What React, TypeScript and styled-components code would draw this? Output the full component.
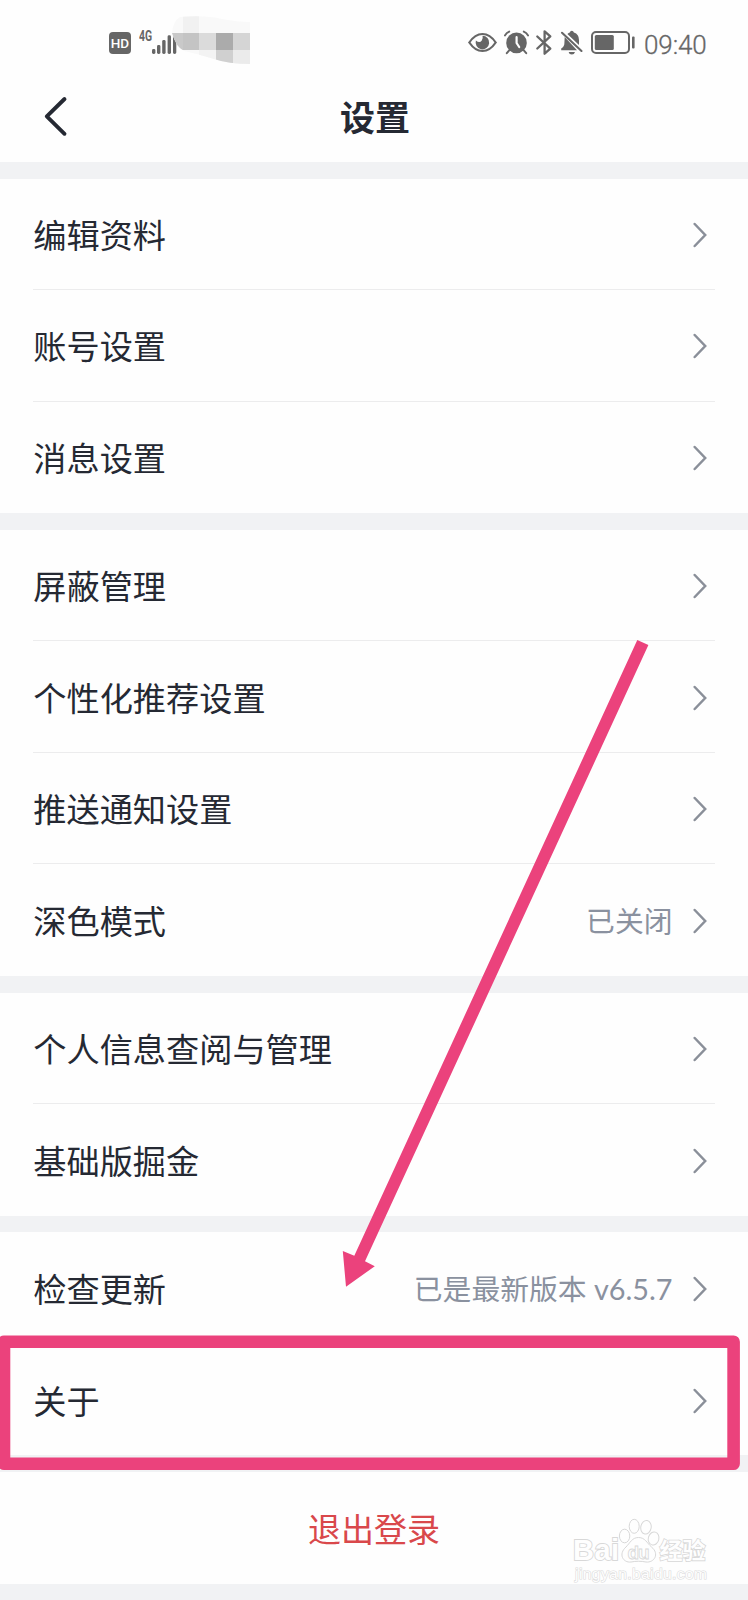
import React from "react";
import styled, { createGlobalStyle } from "styled-components";

const GlobalStyle = createGlobalStyle`
  html, body { margin: 0; padding: 0; background: #fefefe; }
  body { font-family: "Noto Sans CJK SC", sans-serif; color: #252933; }
  * { box-sizing: border-box; }
`;

const Screen = styled.main`
  position: relative;
  width: 748px;
  height: 1600px;
  overflow: hidden;
  display: flex;
  flex-direction: column;
  background: #f1f2f4;
`;

const StatusBar = styled.div`
  display: flex;
  align-items: flex-start;
  height: 74px;
  padding: 0 41px 0 109px;
  background: #fefefe;
  color: #666;
`;

const StatusIcon = styled.svg<{ $top: number; $left?: number }>`
  display: block;
  flex: none;
  overflow: visible;
  margin-top: ${(p) => p.$top}px;
  margin-left: ${(p) => p.$left ?? 0}px;
`;

const Spacer = styled.div`
  flex: 1;
`;

const HdBadge = styled.span`
  width: 22px;
  height: 22px;
  margin-top: 32px;
  border-radius: 4px;
  background: #666;
  color: #fff;
  font: 500 13.5px/23px Roboto, sans-serif;
  text-align: center;
`;

const Network = styled.span`
  width: 13px;
  margin: 30px 0 0 7.5px;
  font: 700 14.5px/14px Roboto, sans-serif;
  white-space: nowrap;
  transform: scaleX(0.72);
  transform-origin: left;
`;

const Clock = styled.span`
  width: 63px;
  margin: 30px 0 0 9px;
  font: 300 26px/31px Roboto, sans-serif;
  letter-spacing: -0.1px;
  white-space: nowrap;
  -webkit-text-stroke: 0.3px #666;
`;

const Header = styled.header`
  display: grid;
  grid-template-columns: 100px 1fr 100px;
  align-items: center;
  height: 88px;
  background: #fefefe;
`;

const BackIcon = styled.svg`
  display: block;
  margin: 0 0 2px 44px;
`;

const Title = styled.h1`
  margin: 0;
  padding: 0 0 4px 2px;
  font-size: 35px;
  line-height: 50px;
  font-weight: 700;
  text-align: center;
`;

const Section = styled.section`
  flex: none;
  margin-top: 16.7px;
  background: #fefefe;
`;

const Row = styled.div`
  display: flex;
  align-items: center;
  height: 111.5px;
  margin: 0 33px;
  padding: 2px 8px 0 0;
  font-size: 33.2px;
  &:not(:last-child) {
    border-bottom: 1px solid #ececed;
  }
`;

const Label = styled.span`
  flex: 1;
  padding: 0 0 2px 0.3px;
  line-height: 48px;
`;

const Value = styled.span`
  margin-right: 20.5px;
  color: #8a919f;
  font-family: Lato, "Noto Sans CJK SC", sans-serif;
  font-size: 28.8px;
  line-height: 42px;
  white-space: nowrap;
`;

const Logout = styled.div`
  display: flex;
  flex: none;
  align-items: center;
  justify-content: center;
  height: 111.6px;
  margin-top: 16.7px;
  background: #fefefe;
  color: #d9484b;
  font-size: 33px;
`;

const Annotation = styled.svg`
  position: absolute;
  inset: 0;
  pointer-events: none;
`;

const Watermark = styled.svg`
  position: absolute;
  left: 570px;
  top: 1515px;
  overflow: visible;
`;

const Chevron = () => (
  <svg width="14" height="26" viewBox="0 0 14 26" fill="none" stroke="#8a8f99" strokeWidth="2.5" strokeLinecap="round">
    <path d="M1.7 2 12.2 13 1.7 24" />
  </svg>
);

type Item = { label: string; value?: string };

const groups: Item[][] = [
  [{ label: "编辑资料" }, { label: "账号设置" }, { label: "消息设置" }],
  [
    { label: "屏蔽管理" },
    { label: "个性化推荐设置" },
    { label: "推送通知设置" },
    { label: "深色模式", value: "已关闭" },
  ],
  [{ label: "个人信息查阅与管理" }, { label: "基础版掘金" }],
  [{ label: "检查更新", value: "已是最新版本 v6.5.7" }, { label: "关于" }],
];

const Signal = () => (
  <StatusIcon $top={32} width="24" height="22" viewBox="0 0 24 22" fill="#666">
    <rect x="0" y="17" width="3.4" height="5" rx="1.4" />
    <rect x="5" y="13" width="3.4" height="9" rx="1.4" />
    <rect x="10.2" y="8" width="3.4" height="14" rx="1.4" />
    <rect x="15.6" y="3.3" width="3.4" height="18.7" rx="1.4" />
    <path d="M21 1Q22 6 24.3 9V20.6Q24.3 22 22.6 22T21 20.6Z" />
  </StatusIcon>
);

const Mosaic = () => (
  <StatusIcon $top={16} $left={-4} width="78" height="48" viewBox="0 0 78 48">
    <clipPath id="smudge">
      <path d="M0 17Q1 5 8 1Q34-1 50 3Q65 6 78 6V48Q56 48 42 43Q22 37 12 35Q4 31 0 17Z" />
    </clipPath>
    <g clipPath="url(#smudge)" shapeRendering="crispEdges">
      <rect width="78" height="48" fill="#f9f9f9" />
      <rect x="11" width="16" height="17" fill="#f1f1f1" />
      <rect y="17" width="11" height="17" fill="#c9c9c9" />
      <rect x="11" y="17" width="16" height="17" fill="#c4c4c4" />
      <rect x="27" y="17" width="17" height="17" fill="#dbdbdb" />
      <rect x="44" y="17" width="17" height="17" fill="#ababab" />
      <rect x="61" y="17" width="17" height="17" fill="#d5d5d5" />
      <rect x="27" y="34" width="17" height="14" fill="#f3f3f3" />
      <rect x="44" y="34" width="17" height="14" fill="#d0d0d0" />
      <rect x="61" y="34" width="17" height="14" fill="#ebebeb" />
    </g>
  </StatusIcon>
);

const EyeIcon = () => (
  <StatusIcon $top={33} width="29" height="19" viewBox="0 0 29 19" fill="none" stroke="#666" strokeWidth="2.2">
    <path d="M1.3 9.5Q7 1 14.5 1T27.7 9.5Q22 18 14.5 18T1.3 9.5Z" />
    <path d="M14.5 2.8A6.8 6.8 0 1 1 7.9 7.6Q11.6 10.6 13.8 7.6Q15.3 5.4 14.5 2.8Z" fill="#666" stroke="none" />
  </StatusIcon>
);

const AlarmIcon = () => (
  <StatusIcon $top={30} $left={7} width="25" height="25" viewBox="0 0 25 25" fill="none" stroke="#666" strokeWidth="2" strokeLinecap="round">
    <circle cx="12.5" cy="12.9" r="10.3" fill="#666" stroke="none" />
    <path d="M1 5.4Q2.4 2.8 5.2 1.6M24 5.4Q22.6 2.8 19.8 1.6M5.4 20.2 2.8 23.2M19.6 20.2 22.2 23.2" />
    <path d="M12.6 7.2V13L15.2 17" stroke="#fff" strokeWidth="2.2" />
  </StatusIcon>
);

const BluetoothIcon = () => (
  <StatusIcon $top={30} $left={7.5} width="16" height="25" viewBox="0 0 16 25" fill="none" stroke="#666" strokeWidth="2.3" strokeLinecap="round" strokeLinejoin="round">
    <path d="M1.3 6.5 14.3 18.6 8.6 23.7V1.3L14.3 6.4 1.3 18.5" />
  </StatusIcon>
);

const MutedBellIcon = () => (
  <StatusIcon $top={30} $left={8} width="23" height="25" viewBox="0 0 23 25" fill="#666">
    <path d="M7.4 4Q8.7 2.6 9.8 2.5Q10.2.8 11.8.8T13.9 2.5Q19 4.2 19 10V15L7.4 4ZM4.7 7 17 20.2H1.2V18.6Q4.4 16.6 4.4 13Z" />
    <path d="M8.6 22H15Q14.4 24.6 11.8 24.6T8.6 22Z" />
    <path d="M2 2.8 21.5 21" fill="none" stroke="#666" strokeWidth="2.1" strokeLinecap="round" />
  </StatusIcon>
);

const BatteryIcon = () => (
  <StatusIcon $top={31} $left={8} width="44" height="23" viewBox="0 0 44 23" fill="#666">
    <rect x="1" y="1" width="37" height="21" rx="4" fill="none" stroke="#666" strokeWidth="2" />
    <rect x="3.8" y="4" width="19" height="15" rx="1.5" />
    <rect x="41" y="5.5" width="2.6" height="12" rx="1" />
  </StatusIcon>
);

export default function App() {
  return (
    <>
      <GlobalStyle />
      <Screen>
        <StatusBar>
          <HdBadge>HD</HdBadge>
          <Network>4G</Network>
          <Signal />
          <Mosaic />
          <Spacer />
          <EyeIcon />
          <AlarmIcon />
          <BluetoothIcon />
          <MutedBellIcon />
          <BatteryIcon />
          <Clock>09:40</Clock>
        </StatusBar>
        <Header>
          <BackIcon width="24" height="42" viewBox="0 0 24 42" fill="none" stroke="#252933" strokeWidth="3.9" strokeLinecap="round" strokeLinejoin="round">
            <path d="M20.5 3 2.8 20.4 20.5 37.8" />
          </BackIcon>
          <Title>设置</Title>
        </Header>
        {groups.map((items, i) => (
          <Section key={i}>
            {items.map((item) => (
              <Row key={item.label}>
                <Label>{item.label}</Label>
                {item.value && <Value>{item.value}</Value>}
                <Chevron />
              </Row>
            ))}
          </Section>
        ))}
        <Logout>退出登录</Logout>

        <Annotation width="748" height="1600" viewBox="0 0 748 1600">
          <path d="M637.3 640 648.4 645 365 1261.3 374.8 1266.2 346 1286.8 342.8 1251 354.3 1255.7Z" fill="#eb427c" />
          <rect x="4" y="1341.7" width="729.6" height="122.1" fill="none" stroke="#eb427c" strokeWidth="12.6" strokeLinejoin="round" />
        </Annotation>

        <Watermark width="140" height="70" viewBox="0 0 140 70" fill="#fefefe" stroke="#d8d8d8" strokeWidth="1">
          <g fontFamily="Liberation Sans, sans-serif" fontWeight="700">
            <text x="3" y="45" fontSize="29" textLength="46" strokeWidth="1.8" paintOrder="stroke">Bai</text>
            <ellipse cx="54.6" cy="21" rx="5.2" ry="6.8" />
            <ellipse cx="64.2" cy="11.3" rx="5" ry="7" />
            <ellipse cx="76" cy="12.3" rx="5.2" ry="6.8" transform="rotate(10 76 12.3)" />
            <ellipse cx="83.6" cy="23.5" rx="5.3" ry="6.6" transform="rotate(15 83.6 23.5)" />
            <path d="M68.5 22.5C75 22.5 77 28 81.5 32C90 39 84 48 76 47C71 46 66 46 61 47C53 48 48 39 56 32C60 28 62 22.5 68.5 22.5Z" />
            <text x="57.5" y="43.5" fontSize="19" textLength="22" strokeWidth="0.8">du</text>
          </g>
          <text x="89.5" y="44" fontSize="23" fontWeight="700" fontFamily="Noto Sans CJK SC, sans-serif" textLength="46" strokeWidth="1.6" paintOrder="stroke">经验</text>
          <text x="5" y="63.5" fontSize="15.5" fontFamily="Liberation Sans, sans-serif" textLength="132" strokeWidth="1.2" stroke="#dcdcdc" paintOrder="stroke">jingyan.baidu.com</text>
        </Watermark>
      </Screen>
    </>
  );
}
